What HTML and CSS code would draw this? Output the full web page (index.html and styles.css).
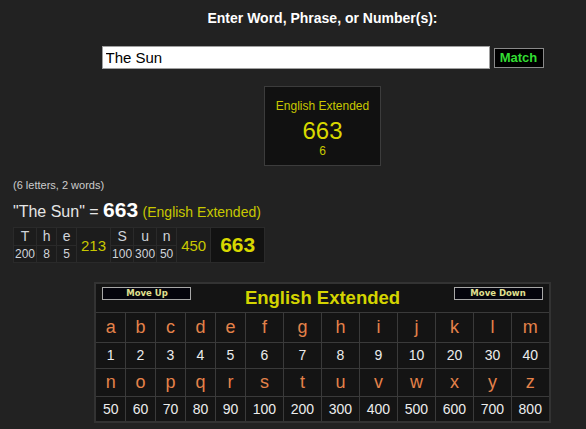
FILE: index.html
```html
<!DOCTYPE html>
<html>
<head>
<meta charset="utf-8">
<link rel="stylesheet" href="styles.css">
</head>
<body>
<div class="top">
  <h1 class="prompt">Enter Word, Phrase, or Number(s):</h1>
  <div class="entry">
    <input class="phrase" type="text" value="The Sun">
    <button class="match">Match</button>
  </div>
  <div class="cipher-box">
    <div class="cb-name">English Extended</div>
    <div class="cb-value">663</div>
    <div class="cb-count">6</div>
  </div>
</div>

<div class="breakdown">
  <div class="counts">(6 letters, 2 words)</div>
  <div class="sumline">"The Sun" = <span class="sum">663</span> <span class="cname">(English Extended)</span></div>
  <table class="bd">
    <tr>
      <td class="l">T</td><td class="l">h</td><td class="l">e</td>
      <td class="wt" rowspan="2">213</td>
      <td class="l">S</td><td class="l">u</td><td class="l">n</td>
      <td class="wt" rowspan="2">450</td>
      <td class="tot" rowspan="2">663</td>
    </tr>
    <tr>
      <td class="n">200</td><td class="n">8</td><td class="n">5</td>
      <td class="n">100</td><td class="n">300</td><td class="n">50</td>
    </tr>
  </table>
</div>

<div class="chart-wrap">
  <table class="chart">
    <colgroup>
      <col class="cs"><col class="cs"><col class="cs"><col class="cs"><col class="cs">
      <col class="cw"><col class="cw"><col class="cw"><col class="cw"><col class="cw"><col class="cw"><col class="cw"><col class="cw">
    </colgroup>
    <tr class="r-head">
      <td colspan="13">
        <div class="head">
          <button class="mv">Move Up</button>
          <span class="title">English Extended</span>
          <button class="mv">Move Down</button>
        </div>
      </td>
    </tr>
    <tr class="r-let1">
      <td class="let">a</td><td class="let">b</td><td class="let">c</td><td class="let">d</td><td class="let">e</td><td class="let">f</td><td class="let">g</td><td class="let">h</td><td class="let">i</td><td class="let">j</td><td class="let">k</td><td class="let">l</td><td class="let">m</td>
    </tr>
    <tr class="r-num1">
      <td class="num">1</td><td class="num">2</td><td class="num">3</td><td class="num">4</td><td class="num">5</td><td class="num">6</td><td class="num">7</td><td class="num">8</td><td class="num">9</td><td class="num">10</td><td class="num">20</td><td class="num">30</td><td class="num">40</td>
    </tr>
    <tr class="r-let2">
      <td class="let">n</td><td class="let">o</td><td class="let">p</td><td class="let">q</td><td class="let">r</td><td class="let">s</td><td class="let">t</td><td class="let">u</td><td class="let">v</td><td class="let">w</td><td class="let">x</td><td class="let">y</td><td class="let">z</td>
    </tr>
    <tr class="r-num2">
      <td class="num">50</td><td class="num">60</td><td class="num">70</td><td class="num">80</td><td class="num">90</td><td class="num">100</td><td class="num">200</td><td class="num">300</td><td class="num">400</td><td class="num">500</td><td class="num">600</td><td class="num">700</td><td class="num">800</td>
    </tr>
  </table>
</div>
</body>
</html>
```

FILE: styles.css
```css
html, body {
  margin: 0;
  padding: 0;
  background: #222222;
  font-family: "Liberation Sans", Arial, sans-serif;
  color: #e0e0e0;
}

.top {
  padding-left: 59px;
  text-align: center;
}

.prompt {
  margin: 0;
  padding-top: 10px;
  font-size: 14px;
  line-height: 16px;
  font-weight: bold;
  color: #ffffff;
}

.entry {
  margin-top: 20px;
  display: flex;
  justify-content: center;
  align-items: center;
}

.phrase {
  box-sizing: border-box;
  width: 388px;
  height: 23px;
  margin: 0;
  padding: 0 3px;
  border: 1px solid #a0a0a0;
  background: #ffffff;
  color: #000000;
  font-family: "Liberation Sans", Arial, sans-serif;
  font-size: 15px;
  outline: none;
}

.match {
  box-sizing: border-box;
  width: 50px;
  height: 20px;
  margin: 0 0 0 4px;
  padding: 0;
  background: #000000;
  border: 1px solid #8a8a8a;
  color: #33dd33;
  font-family: "Liberation Sans", Arial, sans-serif;
  font-size: 13px;
  font-weight: bold;
}

.cipher-box {
  box-sizing: border-box;
  display: inline-block;
  width: 117px;
  height: 80px;
  margin-top: 17px;
  padding-top: 12px;
  background: #111111;
  border: 1px solid #3c3c3c;
  vertical-align: top;
}

.cb-name {
  font-size: 12px;
  line-height: 14px;
  color: #c8c800;
}

.cb-value {
  margin-top: 5px;
  font-size: 24px;
  line-height: 26px;
  color: #d8d800;
}

.cb-count {
  font-size: 12px;
  line-height: 14px;
  color: #c8c800;
}

.breakdown {
  padding-left: 13px;
}

.counts {
  margin-top: 13px;
  font-size: 11px;
  line-height: 13px;
  color: #cccccc;
}

.sumline {
  margin-top: 7px;
  font-size: 16px;
  line-height: 22px;
  color: #e6e6e6;
}

.sum {
  font-size: 21px;
  font-weight: bold;
  color: #ffffff;
}

.cname {
  font-size: 14px;
  color: #c8c800;
}

.bd {
  margin-top: 4px;
  border-collapse: separate;
  border-spacing: 1px;
  background: #2a2a2a;
}

.bd td {
  background: #1c1c1c;
  text-align: center;
  padding: 0 1px;
}

.bd .l {
  min-width: 17px;
  font-size: 14px;
  line-height: 17px;
  color: #d0d4da;
}

.bd .n {
  font-size: 12px;
  line-height: 16px;
  color: #d0d4da;
}

.bd .wt {
  font-size: 15px;
  color: #c8c800;
  padding: 0 4px;
}

.bd .tot {
  background: #121212;
  font-size: 21px;
  font-weight: bold;
  color: #d8d800;
  padding: 0 9px;
}

.chart-wrap {
  padding-left: 59px;
  margin-top: 19px;
}

.chart {
  margin: 0 auto;
  width: 456px;
  table-layout: fixed;
  border-collapse: collapse;
  border: 2px solid #333333;
  background: #141414;
}

.chart .cs { width: 30px; }
.chart .cw { width: 38px; }

.chart td {
  border: 1px solid #3a3a3a;
  text-align: center;
  padding: 0;
}

.r-head { height: 29px; }
.r-let1 { height: 30px; }
.r-num1 { height: 26px; }
.r-let2 { height: 28px; }
.r-num2 { height: 26px; }

.chart .r-head td {
  vertical-align: top;
}

.head {
  display: flex;
  justify-content: space-between;
  align-items: flex-start;
  padding: 3px 6px 0 6px;
}

.mv {
  box-sizing: border-box;
  width: 89px;
  height: 13px;
  margin: 0;
  padding: 0;
  background: #04040c;
  border: 1px solid #a8a8a8;
  color: #e0e090;
  font-family: "DejaVu Sans", Verdana, sans-serif;
  font-size: 8.5px;
  font-weight: bold;
  line-height: 11px;
}

.title {
  margin-top: 0;
  font-size: 18.5px;
  line-height: 22px;
  font-weight: bold;
  color: #d4d400;
}

.let {
  font-size: 18px;
  color: #e4824a;
}

.num {
  font-size: 14px;
  color: #ececec;
}
```
